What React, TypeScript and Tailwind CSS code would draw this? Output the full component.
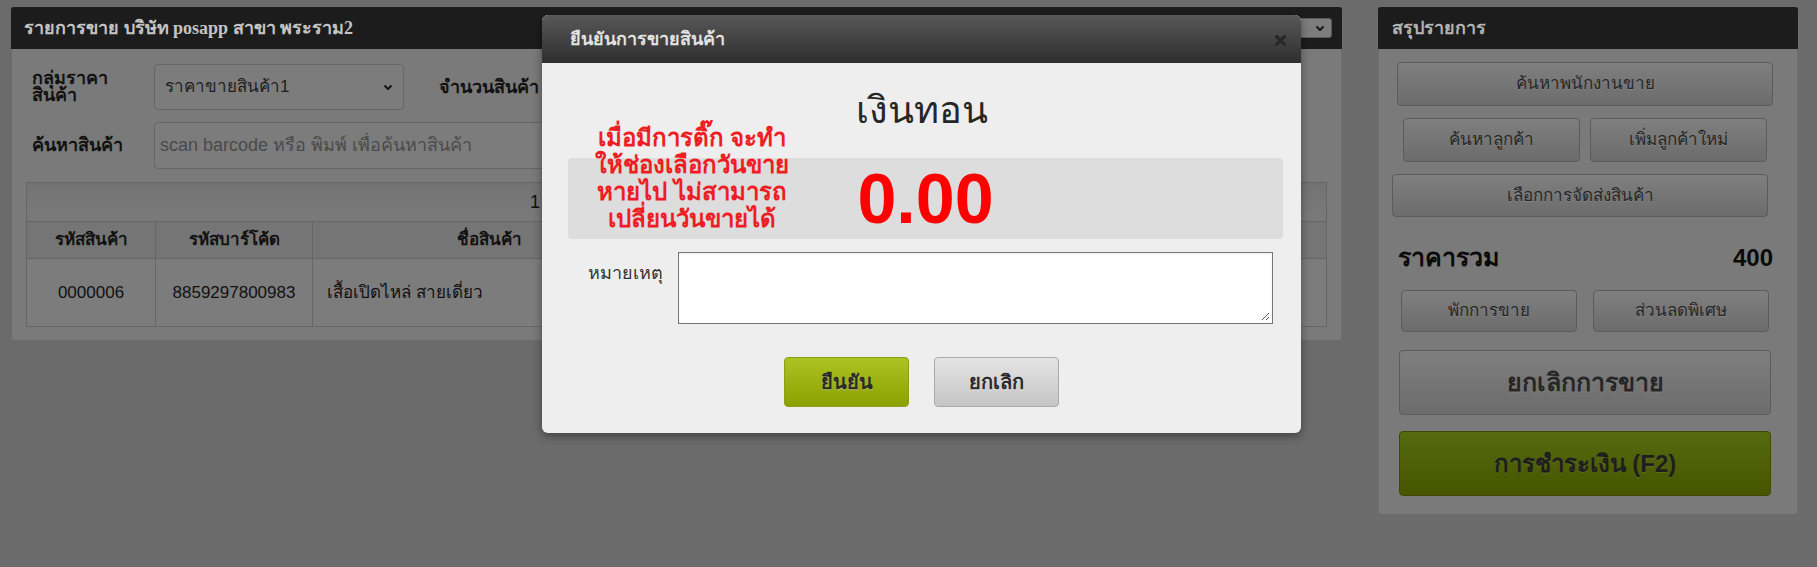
import React from "react";

const sans = "font-['Liberation_Sans','Noto_Sans',sans-serif]";

function SideBtn({
  children,
  className,
}: {
  children: React.ReactNode;
  className: string;
}) {
  return (
    <div
      className={`flex items-center justify-center rounded-[4px] border border-[#5c5c5c] bg-[linear-gradient(#7f7f7f,#6c6c6c)] text-[#262626] [text-shadow:0_1px_0_rgba(255,255,255,0.12)] ${className}`}
    >
      {children}
    </div>
  );
}

export default function App() {
  return (
    <div className={`relative h-[567px] w-full overflow-hidden bg-[#6b6b6b] ${sans}`}>
      <div className="flex items-start gap-[36px] pl-[11px] pt-[7px]">
        {/* Left panel */}
        <div className="w-[1331px] shrink-0">
          <div className="flex h-[42px] items-center justify-between rounded-t-[3px] bg-[#1c1c1c] pl-[13px] pr-[10px]">
            <span className="font-['Liberation_Serif',serif] text-[18px] font-bold text-[#c4c4c4]">
              รายการขาย บริษัท posapp สาขา พระราม2
            </span>
            <div className="flex h-[20px] w-[80px] items-center justify-end rounded-[3px] border border-[#5a5a5a] bg-[#7d7d7d] pr-[5px]">
              <svg width="12" height="12" viewBox="0 0 12 12">
                <path d="M2.5 4.5 L6 8 L9.5 4.5" fill="none" stroke="#111" strokeWidth="1.8" />
              </svg>
            </div>
          </div>
          <div className="rounded-b-[4px] border border-t-0 border-[#6c6c6c] bg-[#7a7a7a] px-[14px] pb-[13px] pt-[15px]">
            <div className="flex items-center pl-[6px]">
              <div className="w-[122px] text-[18px] font-bold leading-[17px] text-[#111]">
                กลุ่มราคา
                <br />
                สินค้า
              </div>
              <div className="flex h-[46px] w-[250px] items-center justify-between rounded-[4px] border border-[#666] bg-[#7c7c7c] pl-[10px] pr-[9px] text-[17px] text-[#1e1e1e]">
                <span>ราคาขายสินค้า1</span>
                <svg width="12" height="12" viewBox="0 0 12 12">
                  <path d="M2.5 4.5 L6 8 L9.5 4.5" fill="none" stroke="#111" strokeWidth="1.8" />
                </svg>
              </div>
              <div className="ml-[35px] text-[18px] font-bold text-[#111]">จำนวนสินค้า</div>
            </div>
            <div className="mt-[12px] flex items-center pl-[6px]">
              <div className="w-[122px] text-[18px] font-bold text-[#111]">ค้นหาสินค้า</div>
              <div className="flex h-[47px] w-[1000px] items-center rounded-[4px] border border-[#666] bg-[#7c7c7c] pl-[5px] text-[18px] text-[#4a4a4a]">
                scan barcode หรือ พิมพ์ เพื่อค้นหาสินค้า
              </div>
            </div>
            <table className="mt-[13px] w-full border-collapse text-[#111]">
              <tbody>
                <tr className="h-[39px] bg-[linear-gradient(#737373,#7a7a7a)]">
                  <td colSpan={6} className="border border-[#666] pl-[503px] text-left text-[18px]">
                    1 รายการ
                  </td>
                </tr>
                <tr className="h-[37px] bg-[#757575] text-[17px] font-bold">
                  <td className="w-[129px] border border-[#666] text-center">รหัสสินค้า</td>
                  <td className="w-[157px] border border-[#666] text-center">รหัสบาร์โค้ด</td>
                  <td className="w-[354px] border border-[#666] text-center">ชื่อสินค้า</td>
                  <td className="border border-[#666] text-center">ราคา</td>
                  <td className="border border-[#666] text-center">จำนวน</td>
                  <td className="border border-[#666] text-center">รวม</td>
                </tr>
                <tr className="h-[68px] bg-[#7c7c7c] text-[17px]">
                  <td className="border border-[#666] text-center">0000006</td>
                  <td className="border border-[#666] text-center">8859297800983</td>
                  <td className="border border-[#666] pl-[14px] text-left">เสื้อเปิดไหล่ สายเดี่ยว</td>
                  <td className="border border-[#666] text-center">400</td>
                  <td className="border border-[#666] text-center">1</td>
                  <td className="border border-[#666] text-center">400</td>
                </tr>
              </tbody>
            </table>
          </div>
        </div>

        {/* Right panel */}
        <div className="w-[420px] shrink-0">
          <div className="flex h-[42px] items-center rounded-t-[3px] bg-[#1c1c1c] pl-[14px]">
            <span className="text-[18px] font-bold text-[#b3b3b3]">สรุปรายการ</span>
          </div>
          <div className="rounded-b-[4px] border border-t-0 border-[#6c6c6c] bg-[#7a7a7a] pb-[18px] pt-[13px]">
            <SideBtn className="ml-[18px] h-[44px] w-[376px] text-[17px]">ค้นหาพนักงานขาย</SideBtn>
            <div className="mt-[12px] flex gap-[10px] pl-[24px]">
              <SideBtn className="h-[44px] w-[177px] text-[17px]">ค้นหาลูกค้า</SideBtn>
              <SideBtn className="h-[44px] w-[177px] text-[17px]">เพิ่มลูกค้าใหม่</SideBtn>
            </div>
            <SideBtn className="ml-[13px] mt-[12px] h-[43px] w-[376px] text-[17px]">เลือกการจัดส่งสินค้า</SideBtn>
            <div className="mt-[26px] flex h-[30px] items-center justify-between pl-[19px] pr-[24px] font-bold text-[#0a0a0a]">
              <span className="text-[25px]">ราคารวม</span>
              <span className="text-[24px]">400</span>
            </div>
            <div className="mt-[17px] flex gap-[16px] pl-[22px]">
              <SideBtn className="h-[42px] w-[176px] text-[17px]">พักการขาย</SideBtn>
              <SideBtn className="h-[42px] w-[176px] text-[17px]">ส่วนลดพิเศษ</SideBtn>
            </div>
            <SideBtn className="ml-[20px] mt-[18px] h-[65px] w-[372px] text-[25px] font-bold">ยกเลิกการขาย</SideBtn>
            <div className="ml-[20px] mt-[16px] flex h-[65px] w-[372px] items-center justify-center rounded-[4px] border border-[#3f4a00] bg-[linear-gradient(#566a10,#475500)] text-[24px] font-bold text-[#1e1e1e] [text-shadow:0_1px_0_rgba(255,255,255,0.1)]">
              การชำระเงิน (F2)
            </div>
          </div>
        </div>
      </div>

      {/* Modal */}
      <div className="absolute left-[542px] top-[15px] w-[759px] overflow-hidden rounded-[6px] bg-[#eeeeee] shadow-[0_3px_10px_rgba(0,0,0,0.4)]">
        <div className="flex h-[48px] items-center justify-between bg-[linear-gradient(#585858,#2e2e2e)] pl-[28px] pr-[15px]">
          <span className="text-[18px] font-bold text-[#e2e2e2]">ยืนยันการขายสินค้า</span>
          <svg width="11" height="11" viewBox="0 0 11 11" className="mt-[2px]">
            <path d="M1.5 1.5 L9.5 9.5 M9.5 1.5 L1.5 9.5" stroke="#262626" strokeWidth="3" strokeLinecap="round" />
          </svg>
        </div>
        <div className="pb-[26px] pt-[22px]">
          <div className="text-center text-[38px] leading-[50px] text-[#262626]">เงินทอน</div>
          <div className="ml-[26px] mr-[18px] mt-[23px] flex h-[81px] items-center justify-center rounded-[4px] bg-[#dddddd]">
            <span className="text-[70px] font-bold leading-none text-[#ff0000]">0.00</span>
          </div>
          <div className="mt-[13px] flex items-start">
            <div className="w-[121px] pt-[8px] text-right text-[18px] text-[#333]">หมายเหตุ</div>
            <div className="relative ml-[15px] h-[72px] w-[595px] border border-[#777] bg-white shadow-[inset_0_1px_2px_rgba(0,0,0,0.08)]">
              <svg className="absolute bottom-[2px] right-[2px]" width="9" height="9" viewBox="0 0 9 9">
                <path d="M8 1 L1 8 M8 5 L5 8" stroke="#555" strokeWidth="1" />
              </svg>
            </div>
          </div>
          <div className="mt-[33px] flex justify-center gap-[25px]">
            <div className="flex h-[50px] w-[125px] items-center justify-center rounded-[4px] border border-[#8b9f12] bg-[linear-gradient(#acc323,#8aa100)] text-[20px] font-bold text-[#2a2a2a] [text-shadow:0_1px_0_rgba(255,255,255,0.35)]">
              ยืนยัน
            </div>
            <div className="flex h-[50px] w-[125px] items-center justify-center rounded-[4px] border border-[#aaa] bg-[linear-gradient(#e4e4e4,#c5c5c5)] text-[20px] font-bold text-[#2a2a2a] [text-shadow:0_1px_0_rgba(255,255,255,0.5)]">
              ยกเลิก
            </div>
          </div>
        </div>
      </div>

      {/* Red annotation */}
      <div className="absolute left-[572px] top-[124px] w-[240px] text-center text-[24px] font-bold leading-[27px] text-[#ee1d23]">
        เมื่อมีการติ๊ก จะทำ
        <br />
        ให้ช่องเลือกวันขาย
        <br />
        หายไป ไม่สามารถ
        <br />
        เปลี่ยนวันขายได้
      </div>
    </div>
  );
}
